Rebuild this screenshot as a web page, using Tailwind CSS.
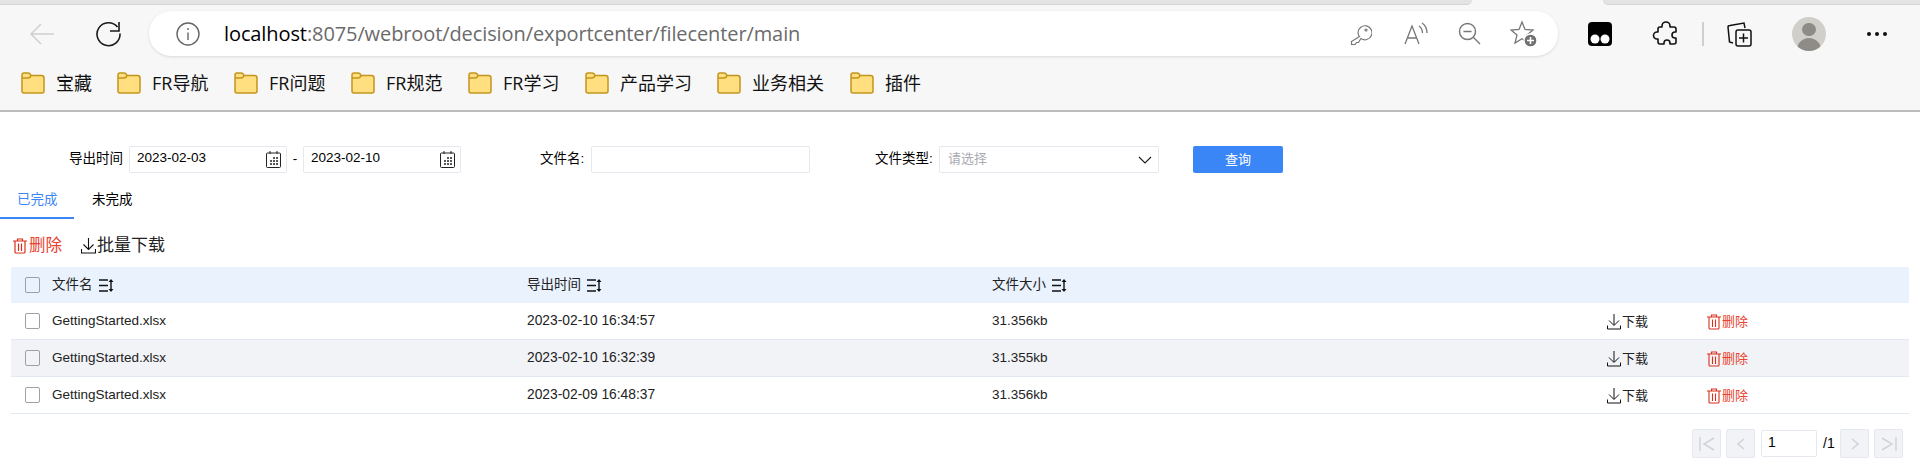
<!DOCTYPE html>
<html lang="zh-CN">
  <head>
    <meta charset="UTF-8" />
    <title>文件中心</title>
    <script src="https://cdn.jsdelivr.net/npm/@tailwindcss/browser@4"></script>
  </head>
  <body class="bg-white text-black h-[475px] overflow-hidden font-['Liberation_Sans','Noto_Sans_CJK_SC',sans-serif]">

    <!-- Browser chrome -->
    <div class="h-[112px] bg-[#f7f7f7] border-b-2 border-[#bdbdbd]">
      <!-- Tab strip edge -->
      <div class="h-[5px] flex">
        <div class="w-[1472px] bg-[#e3e3e3] border-b border-[#d4d4d4] rounded-br-md"></div>
        <div class="w-[131px]"></div>
        <div class="flex-1 bg-[#e3e3e3] border-b border-[#d4d4d4] rounded-bl-md"></div>
      </div>

      <!-- Address row -->
      <div class="h-[51px] flex items-center pt-[6px]">
        <svg class="ml-[29px] w-[26px] h-[24px]" viewBox="0 0 26 24" fill="none" stroke="#d0d0d0" stroke-width="1.5"><path d="M25 12H2M12 2 2 12l10 10" /></svg>
        <svg class="ml-[41px] w-[26px] h-[28px]" viewBox="0 0 26 28" fill="none" stroke="#1a1a1a" stroke-width="1.6"><path d="M21.500 7A11.500 11.500 0 1 0 24 13.500" /><path d="M23 2v9h-9" /></svg>
        <div class="ml-[27px] w-[1409px] h-[45px] bg-white rounded-[22px] shadow-[0_1px_3px_rgba(0,0,0,0.12)] flex items-center">
          <svg class="ml-[27px] w-[24px] h-[24px]" viewBox="0 0 24 24" fill="none" stroke="#666" stroke-width="1.4"><circle cx="12" cy="12" r="11" /><path d="M12 10.500V18M12 6v2" /></svg>
          <div class="ml-[24px] w-[600px] text-[20px] leading-none font-['Open_Sans','Noto_Sans',sans-serif] tracking-[-0.1px] text-[#6b6b6b]"><span class="text-black">localhost</span>:8075/webroot/decision/exportcenter/filecenter/main</div>
          <svg class="ml-[526px] w-[22px] h-[22px]" viewBox="0 0 22 22" fill="none" stroke="#777" stroke-width="1.2"><path d="M9.500 13.500 1.500 18.500V21.500H5L6.500 19.500H8.500L10 17 11 15.500A7 7 0 1 0 8 9.500C8 10.800 8.500 12.500 9.500 13.500Z" /><circle cx="16" cy="7" r="1" /></svg>
          <svg class="ml-[32px] w-[24px] h-[24px]" viewBox="0 0 24 24" fill="none" stroke="#777" stroke-width="1.3"><path d="M1 22 8 4l7 18M3.500 16h9" /><path d="M15 4c2 1.500 3.500 4 3.500 7M18 1c3 2 5 6 5 10" /></svg>
          <svg class="ml-[30px] w-[23px] h-[23px]" viewBox="0 0 23 23" fill="none" stroke="#777" stroke-width="1.4"><circle cx="9.500" cy="9.500" r="8" /><path d="M5.500 9.500h8M15 15l7 7" /></svg>
          <svg class="ml-[29px] w-[28px] h-[28px]" viewBox="0 0 28 28" fill="none" stroke="#777" stroke-width="1.3"><path d="M12 2l3 7.500 8 .5-6 5 2 8-7-4.300L5 23l2-8-6-5 8-.5L12 2Z" /><circle cx="20.500" cy="20.500" r="6.500" fill="#707070" stroke="#fff" /><path d="M20.500 17v7M17 20.500h7" stroke="#fff" stroke-width="1.600" /></svg>
        </div>
        <svg class="ml-[30px] w-[24px] h-[24px]" viewBox="0 0 24 24"><rect width="24" height="24" rx="4" fill="#000" /><circle cx="7" cy="17" r="4.500" fill="#fff" /><circle cx="17" cy="17" r="4.500" fill="#fff" /></svg>
        <svg class="ml-[42px] w-[24px] h-[26px] overflow-visible" viewBox="0 0 24 26" fill="none" stroke="#111" stroke-width="1.600" stroke-linejoin="round"><path d="M8 6V5a4 4 0 0 1 8 0v1h4a2 2 0 0 1 2 2v3h-1a3 3 0 0 0 0 6h1v4a2 2 0 0 1-2 2h-4v-1a3 3 0 0 0-6 0v1H6a2 2 0 0 1-2-2v-3H3a3.500 3.500 0 0 1 0-7h1V8a2 2 0 0 1 2-2Z" /></svg>
        <div class="ml-[24px] w-[2px] h-[24px] bg-[#cfcfcf]"></div>
        <svg class="ml-[23px] w-[25px] h-[26px]" viewBox="0 0 25 26" fill="none" stroke="#111" stroke-width="1.500"><rect x="9" y="9" width="15" height="16" rx="2" /><path d="M16.500 12.500v9M12 17h9" /><path d="M6 22 2.500 21 1 6c0-1 1-1.500 2-1.500L17 2l1 5" /></svg>
        <div class="ml-[40px] w-[34px] h-[34px] rounded-full bg-[#d0cfca] overflow-hidden flex flex-col items-center">
          <div class="mt-[6px] w-[14px] h-[15px] rounded-full bg-[#8f8c88]"></div>
          <div class="mt-[2px] w-[24px] h-[14px] rounded-t-full bg-[#8f8c88]"></div>
        </div>
        <div class="ml-[41px] flex gap-[4px]">
          <span class="w-[4px] h-[4px] rounded-full bg-[#111]"></span>
          <span class="w-[4px] h-[4px] rounded-full bg-[#111]"></span>
          <span class="w-[4px] h-[4px] rounded-full bg-[#111]"></span>
        </div>
      </div>

      <!-- Bookmarks bar -->
      <div class="mt-[12px] pl-[21px] h-[30px] flex items-center text-[18px] leading-none text-[#111] font-['Open_Sans','Noto_Sans_CJK_SC',sans-serif]">
        <div class="w-[96px] flex items-center gap-[11px]"><svg class="w-[24px] h-[22px] shrink-0" viewBox="0 0 24 22" stroke="#c4951c" stroke-width="1.500"><path d="M1 3A2 2 0 0 1 3 1h4c1.500 0 2.500 1 3 2.500h10.500A2.500 2.500 0 0 1 23 6v13a2 2 0 0 1-2 2H3a2 2 0 0 1-2-2Z" fill="#ffdf80" /><path d="M1 6h6c1.500 0 2.500-1 3-2.500" fill="none" /></svg><span>宝藏</span></div>
        <div class="w-[117px] flex items-center gap-[11px]"><svg class="w-[24px] h-[22px] shrink-0" viewBox="0 0 24 22" stroke="#c4951c" stroke-width="1.500"><path d="M1 3A2 2 0 0 1 3 1h4c1.500 0 2.500 1 3 2.500h10.500A2.500 2.500 0 0 1 23 6v13a2 2 0 0 1-2 2H3a2 2 0 0 1-2-2Z" fill="#ffdf80" /><path d="M1 6h6c1.500 0 2.500-1 3-2.500" fill="none" /></svg><span>FR导航</span></div>
        <div class="w-[117px] flex items-center gap-[11px]"><svg class="w-[24px] h-[22px] shrink-0" viewBox="0 0 24 22" stroke="#c4951c" stroke-width="1.500"><path d="M1 3A2 2 0 0 1 3 1h4c1.500 0 2.500 1 3 2.500h10.500A2.500 2.500 0 0 1 23 6v13a2 2 0 0 1-2 2H3a2 2 0 0 1-2-2Z" fill="#ffdf80" /><path d="M1 6h6c1.500 0 2.500-1 3-2.500" fill="none" /></svg><span>FR问题</span></div>
        <div class="w-[117px] flex items-center gap-[11px]"><svg class="w-[24px] h-[22px] shrink-0" viewBox="0 0 24 22" stroke="#c4951c" stroke-width="1.500"><path d="M1 3A2 2 0 0 1 3 1h4c1.500 0 2.500 1 3 2.500h10.500A2.500 2.500 0 0 1 23 6v13a2 2 0 0 1-2 2H3a2 2 0 0 1-2-2Z" fill="#ffdf80" /><path d="M1 6h6c1.500 0 2.500-1 3-2.500" fill="none" /></svg><span>FR规范</span></div>
        <div class="w-[117px] flex items-center gap-[11px]"><svg class="w-[24px] h-[22px] shrink-0" viewBox="0 0 24 22" stroke="#c4951c" stroke-width="1.500"><path d="M1 3A2 2 0 0 1 3 1h4c1.500 0 2.500 1 3 2.500h10.500A2.500 2.500 0 0 1 23 6v13a2 2 0 0 1-2 2H3a2 2 0 0 1-2-2Z" fill="#ffdf80" /><path d="M1 6h6c1.500 0 2.500-1 3-2.500" fill="none" /></svg><span>FR学习</span></div>
        <div class="w-[132px] flex items-center gap-[11px]"><svg class="w-[24px] h-[22px] shrink-0" viewBox="0 0 24 22" stroke="#c4951c" stroke-width="1.500"><path d="M1 3A2 2 0 0 1 3 1h4c1.500 0 2.500 1 3 2.500h10.500A2.500 2.500 0 0 1 23 6v13a2 2 0 0 1-2 2H3a2 2 0 0 1-2-2Z" fill="#ffdf80" /><path d="M1 6h6c1.500 0 2.500-1 3-2.500" fill="none" /></svg><span>产品学习</span></div>
        <div class="w-[133px] flex items-center gap-[11px]"><svg class="w-[24px] h-[22px] shrink-0" viewBox="0 0 24 22" stroke="#c4951c" stroke-width="1.500"><path d="M1 3A2 2 0 0 1 3 1h4c1.500 0 2.500 1 3 2.500h10.500A2.500 2.500 0 0 1 23 6v13a2 2 0 0 1-2 2H3a2 2 0 0 1-2-2Z" fill="#ffdf80" /><path d="M1 6h6c1.500 0 2.500-1 3-2.500" fill="none" /></svg><span>业务相关</span></div>
        <div class="flex items-center gap-[11px]"><svg class="w-[24px] h-[22px] shrink-0" viewBox="0 0 24 22" stroke="#c4951c" stroke-width="1.500"><path d="M1 3A2 2 0 0 1 3 1h4c1.500 0 2.500 1 3 2.500h10.500A2.500 2.500 0 0 1 23 6v13a2 2 0 0 1-2 2H3a2 2 0 0 1-2-2Z" fill="#ffdf80" /><path d="M1 6h6c1.500 0 2.500-1 3-2.500" fill="none" /></svg><span>插件</span></div>
      </div>
    </div>

    <!-- Filter row -->
    <div class="mt-[34px] h-[27px] flex items-center text-[13.5px]">
      <label class="ml-[69px] w-[60px] whitespace-nowrap">导出时间</label>
      <div class="w-[158px] h-[27px] border border-[#e6e8ef] rounded-[2px] flex items-center justify-between pl-[7px] pr-[5px] text-[13.5px] pb-[2px]">
        2023-02-03
        <svg class="w-[15px] h-[17px] mt-[2px]" viewBox="0 0 15 17" fill="none" stroke="#222"><rect x=".5" y="2" width="14" height="14.500" rx="1" /><path d="M4 0v3M11 0v3" /><path d="M7 7h2M10 7h2M4 10h2M7 10h2M10 10h2M4 13h2M7 13h2M10 13h2" stroke-width="1.500" /></svg>
      </div>
      <span class="w-[16px] text-center">-</span>
      <div class="w-[158px] h-[27px] border border-[#e6e8ef] rounded-[2px] flex items-center justify-between pl-[7px] pr-[5px] text-[13.5px] pb-[2px]">
        2023-02-10
        <svg class="w-[15px] h-[17px] mt-[2px]" viewBox="0 0 15 17" fill="none" stroke="#222"><rect x=".5" y="2" width="14" height="14.500" rx="1" /><path d="M4 0v3M11 0v3" /><path d="M7 7h2M10 7h2M4 10h2M7 10h2M10 10h2M4 13h2M7 13h2M10 13h2" stroke-width="1.500" /></svg>
      </div>
      <label class="ml-[79px] w-[51px] whitespace-nowrap">文件名:</label>
      <div class="w-[219px] h-[27px] border border-[#e6e8ef] rounded-[2px]"></div>
      <label class="ml-[65px] w-[64px] whitespace-nowrap">文件类型:</label>
      <div class="w-[220px] h-[27px] border border-[#e6e8ef] rounded-[2px] flex items-center justify-between pl-[8px] pr-[6px] text-[#a8abb3] pb-[2px] text-[13px]">
        请选择
        <svg class="w-[14px] h-[8px] mt-[2px]" viewBox="0 0 14 8" fill="none" stroke="#222" stroke-width="1.200"><path d="M1 1l6 6 6-6" /></svg>
      </div>
      <button class="ml-[34px] w-[90px] h-[27px] bg-[#3b86f6] rounded-[2px] text-white text-[13px]">查询</button>
    </div>

    <!-- Tabs -->
    <div class="mt-[17px] h-[29px] flex text-[13.5px]">
      <div class="w-[74px] h-[29px] border-b-2 border-[#3b86f6] text-[#3b86f6] pl-[17px]">已完成</div>
      <div class="pl-[18px]">未完成</div>
    </div>

    <!-- Actions -->
    <div class="mt-[15px] ml-[13px] h-[23px] flex items-center">
      <svg class="w-[14px] h-[16px]" viewBox="0 0 14 16" fill="none" stroke="#d9301c" stroke-width="1.200"><path d="M0 3h14M4.500 3V1h5v2M2 3v11a1 1 0 0 0 1 1h8a1 1 0 0 0 1-1V3M5.500 5.500V13M8.500 5.500V13" /></svg>
      <span class="ml-[2px] text-[16.500px] text-[#e8432f]">删除</span>
      <svg class="ml-[19px] w-[15px] h-[16px]" viewBox="0 0 15 16" fill="none" stroke="#111" stroke-width="1.100"><path d="M7.500 0v11M2.500 6.500l5 5 5-5M.5 11v4h14v-4" /></svg>
      <span class="ml-[1px] text-[17px] text-[#222]">批量下载</span>
    </div>

    <!-- Table -->
    <div class="mt-[10px] mx-[11px] text-[13.5px] text-[#222]">
      <div class="h-[36px] bg-[#eaf2fd] flex items-center">
        <span class="ml-[14px] w-[15px] h-[16px] border border-[#9ca0a8] rounded-[2px]"></span>
        <div class="ml-[12px] w-[475px] flex items-center gap-[6px]">
          <span>文件名</span>
          <svg class="w-[15px] h-[13px]" viewBox="0 0 15 13" fill="none" stroke="#111" stroke-width="1.400"><path d="M0 1h9M0 6.500h9M0 12h9M12 2v9" /><path d="M9.500 3 12 0l2.500 3ZM9.500 10 12 13l2.500-3Z" fill="#111" stroke="none" /></svg>
        </div>
        <div class="w-[465px] flex items-center gap-[6px]">
          <span>导出时间</span>
          <svg class="w-[15px] h-[13px]" viewBox="0 0 15 13" fill="none" stroke="#111" stroke-width="1.400"><path d="M0 1h9M0 6.500h9M0 12h9M12 2v9" /><path d="M9.500 3 12 0l2.500 3ZM9.500 10 12 13l2.500-3Z" fill="#111" stroke="none" /></svg>
        </div>
        <div class="flex items-center gap-[6px]">
          <span>文件大小</span>
          <svg class="w-[15px] h-[13px]" viewBox="0 0 15 13" fill="none" stroke="#111" stroke-width="1.400"><path d="M0 1h9M0 6.500h9M0 12h9M12 2v9" /><path d="M9.500 3 12 0l2.500 3ZM9.500 10 12 13l2.500-3Z" fill="#111" stroke="none" /></svg>
        </div>
      </div>

      <div class="h-[37px] flex items-center border-b border-[#e2e8f2]">
        <span class="ml-[14px] w-[15px] h-[16px] border border-[#9ca0a8] rounded-[2px] bg-white"></span>
        <span class="ml-[12px] w-[475px]">GettingStarted.xlsx</span>
        <span class="w-[465px] text-[13.800px]">2023-02-10 16:34:57</span>
        <span class="w-[615px]">31.356kb</span>
        <svg class="w-[14px] h-[16px] mt-[2px]" viewBox="0 0 14 16" fill="none" stroke="#111" stroke-width="1"><path d="M7 0v11M2 6.500l5 5 5-5M.5 11.500V15h13v-3.500" /></svg>
        <span class="w-[86px] pl-[1px] mt-[1px] text-[13px]">下载</span>
        <svg class="w-[14px] h-[16px] mt-[2px]" viewBox="0 0 14 16" fill="none" stroke="#d9301c" stroke-width="1.100"><path d="M0 3h14M4.500 3V1h5v2M2 3v11a1 1 0 0 0 1 1h8a1 1 0 0 0 1-1V3M5.500 5.500V13M8.500 5.500V13" /></svg>
        <span class="pl-[1px] mt-[1px] text-[13px] text-[#e8432f]">删除</span>
      </div>
      <div class="h-[37px] flex items-center border-b border-[#e2e8f2] bg-[#f2f3f7]">
        <span class="ml-[14px] w-[15px] h-[16px] border border-[#9ca0a8] rounded-[2px] bg-[#f2f3f7]"></span>
        <span class="ml-[12px] w-[475px]">GettingStarted.xlsx</span>
        <span class="w-[465px] text-[13.800px]">2023-02-10 16:32:39</span>
        <span class="w-[615px]">31.355kb</span>
        <svg class="w-[14px] h-[16px] mt-[2px]" viewBox="0 0 14 16" fill="none" stroke="#111" stroke-width="1"><path d="M7 0v11M2 6.500l5 5 5-5M.5 11.500V15h13v-3.500" /></svg>
        <span class="w-[86px] pl-[1px] mt-[1px] text-[13px]">下载</span>
        <svg class="w-[14px] h-[16px] mt-[2px]" viewBox="0 0 14 16" fill="none" stroke="#d9301c" stroke-width="1.100"><path d="M0 3h14M4.500 3V1h5v2M2 3v11a1 1 0 0 0 1 1h8a1 1 0 0 0 1-1V3M5.500 5.500V13M8.500 5.500V13" /></svg>
        <span class="pl-[1px] mt-[1px] text-[13px] text-[#e8432f]">删除</span>
      </div>
      <div class="h-[37px] flex items-center border-b border-[#e2e8f2]">
        <span class="ml-[14px] w-[15px] h-[16px] border border-[#9ca0a8] rounded-[2px] bg-white"></span>
        <span class="ml-[12px] w-[475px]">GettingStarted.xlsx</span>
        <span class="w-[465px] text-[13.800px]">2023-02-09 16:48:37</span>
        <span class="w-[615px]">31.356kb</span>
        <svg class="w-[14px] h-[16px] mt-[2px]" viewBox="0 0 14 16" fill="none" stroke="#111" stroke-width="1"><path d="M7 0v11M2 6.500l5 5 5-5M.5 11.500V15h13v-3.500" /></svg>
        <span class="w-[86px] pl-[1px] mt-[1px] text-[13px]">下载</span>
        <svg class="w-[14px] h-[16px] mt-[2px]" viewBox="0 0 14 16" fill="none" stroke="#d9301c" stroke-width="1.100"><path d="M0 3h14M4.500 3V1h5v2M2 3v11a1 1 0 0 0 1 1h8a1 1 0 0 0 1-1V3M5.500 5.500V13M8.500 5.500V13" /></svg>
        <span class="pl-[1px] mt-[1px] text-[13px] text-[#e8432f]">删除</span>
      </div>
    </div>

    <!-- Pagination -->
    <div class="mt-[15px] mr-[17px] flex justify-end items-center text-[14px]">
      <div class="w-[29px] h-[29px] border border-[#e6e8ef] bg-[#f2f3f7] rounded-[2px] flex items-center justify-center"><svg class="w-[16px] h-[14px]" viewBox="0 0 16 14" fill="none" stroke="#cfd3da" stroke-width="1.500"><path d="M1 0v14M15 1 5 7l10 6" /></svg></div>
      <div class="ml-[5px] w-[29px] h-[29px] border border-[#e6e8ef] bg-[#f2f3f7] rounded-[2px] flex items-center justify-center"><svg class="w-[8px] h-[12px]" viewBox="0 0 8 12" fill="none" stroke="#cfd3da" stroke-width="1.500"><path d="M7 1 1 6l6 5" /></svg></div>
      <div class="ml-[6px] w-[56px] h-[27px] border border-[#e6e8ef] rounded-[2px] pl-[6px] leading-[22px]">1</div>
      <span class="ml-[6px] w-[17px]">/1</span>
      <div class="w-[29px] h-[29px] border border-[#e6e8ef] bg-[#f2f3f7] rounded-[2px] flex items-center justify-center"><svg class="w-[8px] h-[12px]" viewBox="0 0 8 12" fill="none" stroke="#cfd3da" stroke-width="1.500"><path d="M1 1l6 5-6 5" /></svg></div>
      <div class="ml-[5px] w-[29px] h-[29px] border border-[#e6e8ef] bg-[#f2f3f7] rounded-[2px] flex items-center justify-center"><svg class="w-[16px] h-[14px]" viewBox="0 0 16 14" fill="none" stroke="#cfd3da" stroke-width="1.500"><path d="M15 0v14M1 1l10 6-10 6" /></svg></div>
    </div>

  </body>
</html>
